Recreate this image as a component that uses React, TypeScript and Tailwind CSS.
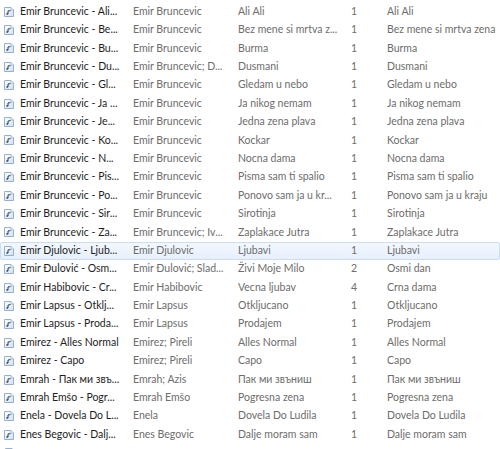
import React from "react";

interface Track {
  name: string;
  artists: string;
  album: string;
  num: string;
  title: string;
}

const tracks: Track[] = [
  { name: "Emir Bruncevic - Ali...", artists: "Emir Bruncevic", album: "Ali Ali", num: "1", title: "Ali Ali" },
  { name: "Emir Bruncevic - Be...", artists: "Emir Bruncevic", album: "Bez mene si mrtva z...", num: "1", title: "Bez mene si mrtva zena" },
  { name: "Emir Bruncevic - Bu...", artists: "Emir Bruncevic", album: "Burma", num: "1", title: "Burma" },
  { name: "Emir Bruncevic - Du...", artists: "Emir Bruncevic; D...", album: "Dusmani", num: "1", title: "Dusmani" },
  { name: "Emir Bruncevic - Gl...", artists: "Emir Bruncevic", album: "Gledam u nebo", num: "1", title: "Gledam u nebo" },
  { name: "Emir Bruncevic - Ja ...", artists: "Emir Bruncevic", album: "Ja nikog nemam", num: "1", title: "Ja nikog nemam" },
  { name: "Emir Bruncevic - Je...", artists: "Emir Bruncevic", album: "Jedna zena plava", num: "1", title: "Jedna zena plava" },
  { name: "Emir Bruncevic - Ko...", artists: "Emir Bruncevic", album: "Kockar", num: "1", title: "Kockar" },
  { name: "Emir Bruncevic - N...", artists: "Emir Bruncevic", album: "Nocna dama", num: "1", title: "Nocna dama" },
  { name: "Emir Bruncevic - Pis...", artists: "Emir Bruncevic", album: "Pisma sam ti spalio", num: "1", title: "Pisma sam ti spalio" },
  { name: "Emir Bruncevic - Po...", artists: "Emir Bruncevic", album: "Ponovo sam ja u kr...", num: "1", title: "Ponovo sam ja u kraju" },
  { name: "Emir Bruncevic - Sir...", artists: "Emir Bruncevic", album: "Sirotinja", num: "1", title: "Sirotinja" },
  { name: "Emir Bruncevic - Za...", artists: "Emir Bruncevic; Iv...", album: "Zaplakace Jutra", num: "1", title: "Zaplakace Jutra" },
  { name: "Emir Djulovic - Ljub...", artists: "Emir Djulovic", album: "Ljubavi", num: "1", title: "Ljubavi" },
  { name: "Emir Đulović - Osm...", artists: "Emir Đulović; Slad...", album: "Živi Moje Milo", num: "2", title: "Osmi dan" },
  { name: "Emir Habibovic - Cr...", artists: "Emir Habibovic", album: "Vecna ljubav", num: "4", title: "Crna dama" },
  { name: "Emir Lapsus - Otklj...", artists: "Emir Lapsus", album: "Otkljucano", num: "1", title: "Otkljucano" },
  { name: "Emir Lapsus - Proda...", artists: "Emir Lapsus", album: "Prodajem", num: "1", title: "Prodajem" },
  { name: "Emirez - Alles Normal", artists: "Emirez; Pireli", album: "Alles Normal", num: "1", title: "Alles Normal" },
  { name: "Emirez - Capo", artists: "Emirez; Pireli", album: "Capo", num: "1", title: "Capo" },
  { name: "Emrah - Пак ми звъ...", artists: "Emrah; Azis", album: "Пак ми звъниш", num: "1", title: "Пак ми звъниш" },
  { name: "Emrah Emšo - Pogr...", artists: "Emrah Emšo", album: "Pogresna zena", num: "1", title: "Pogresna zena" },
  { name: "Enela - Dovela Do L...", artists: "Enela", album: "Dovela Do Ludila", num: "1", title: "Dovela Do Ludila" },
  { name: "Enes Begovic - Dalj...", artists: "Enes Begovic", album: "Dalje moram sam", num: "1", title: "Dalje moram sam" },
];

function AudioIcon() {
  return (
    <svg width="10" height="10" viewBox="0 0 10 10" className="shrink-0">
      <defs>
        <linearGradient id="pg" x1="0" y1="0" x2="1" y2="1">
          <stop offset="0" stopColor="#ffffff" />
          <stop offset="1" stopColor="#cfe1f5" />
        </linearGradient>
      </defs>
      <path d="M0.5 0.5 H7 L9.5 3 V9.5 H0.5 Z" fill="url(#pg)" stroke="#94b1d4" strokeWidth="1" />
      <path d="M7 0.5 V3 H9.5" fill="#eaf2fb" stroke="#94b1d4" strokeWidth="0.7" />
      <path d="M4 7 V4 L6.6 3.6" stroke="#222832" strokeWidth="0.9" fill="none" />
      <ellipse cx="3.2" cy="7" rx="1" ry="0.8" fill="#222832" />
    </svg>
  );
}

export default function App() {
  return (
    <div
      className="w-[500px] h-[449px] overflow-hidden bg-white pt-[2.5px] text-[10.5px] text-[#6d6d6d]"
      style={{ fontFamily: "Lato, 'Noto Sans', sans-serif" }}
    >
      {tracks.map((t, i) => {
        const hot = i === 13;
        return (
          <div
            key={i}
            className={
              hot
                ? "flex items-center h-[18.4px] whitespace-nowrap rounded-[2px] border border-[#c8ddf6] bg-gradient-to-b from-[#f3f8fe] to-[#e6f0fc]"
                : "flex items-center h-[18.4px] whitespace-nowrap border border-transparent"
            }
          >
            <div className="flex items-center w-[132px] pl-[3px] gap-[6px] text-[#1e1e1e]">
              <AudioIcon />
              <span>{t.name}</span>
            </div>
            <div className="w-[105px] overflow-hidden">{t.artists}</div>
            <div className="w-[113px] overflow-hidden">{t.album}</div>
            <div className="w-[36px]">{t.num}</div>
            <div className="flex-1 overflow-hidden">{t.title}</div>
          </div>
        );
      })}
      <div className="flex items-center h-[18.4px] pl-[4px] border border-transparent">
        <AudioIcon />
      </div>
    </div>
  );
}
